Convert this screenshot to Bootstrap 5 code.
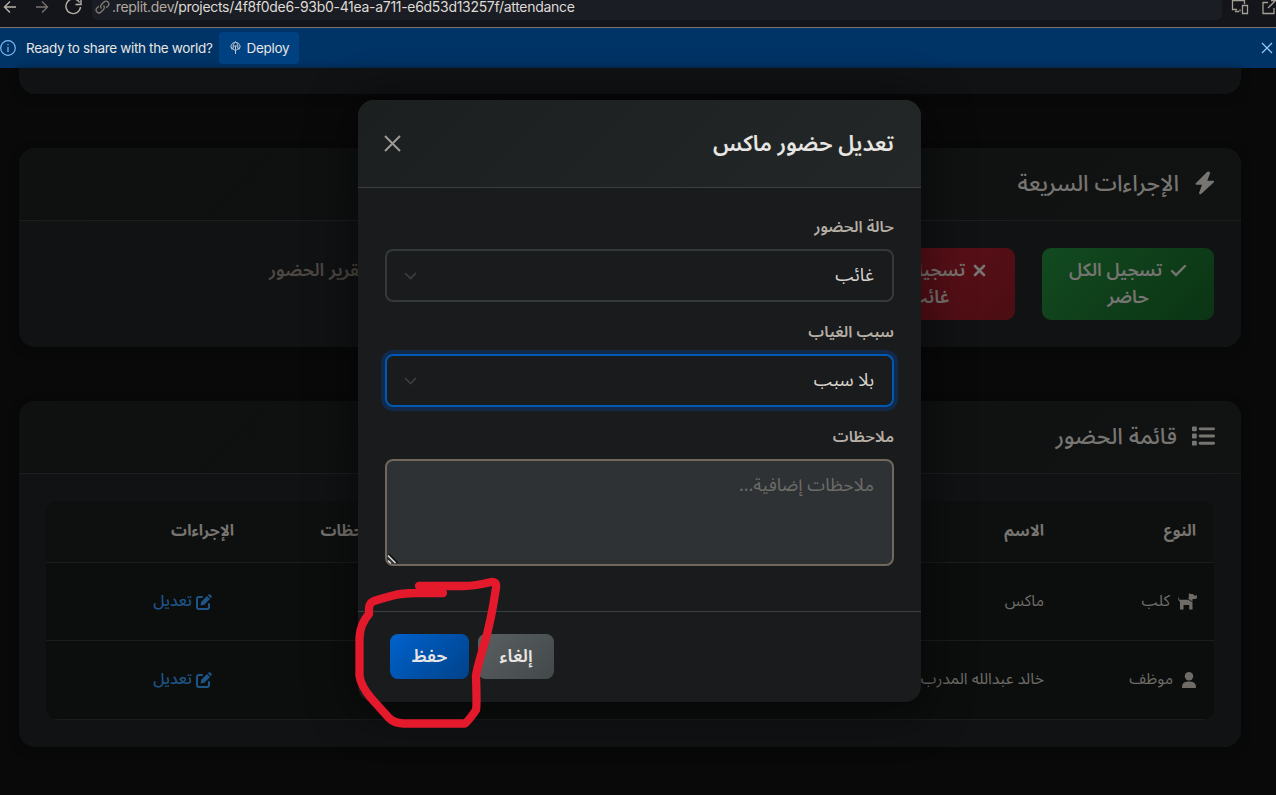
<!DOCTYPE html>
<html lang="ar">
<head>
<meta charset="utf-8">
<meta name="viewport" content="width=device-width, initial-scale=1">
<title>Attendance</title>
<link href="https://cdn.jsdelivr.net/npm/bootstrap@5.3.0/dist/css/bootstrap.min.css" rel="stylesheet">
<style>
body{background:#090909;height:795px;overflow:hidden;font-family:"Noto Sans Arabic","Noto Sans","DejaVu Sans",sans-serif;color:#777571}
svg{display:block;flex:none}
.latin{font-family:Inter,Roboto,sans-serif}
.urlbar{height:27px;background:#14141b;color:#b8b2a8}
.addr{height:20px;width:1130px;background:#1b1d24;border-radius:0 0 5px 5px;font-size:14px;line-height:13px;letter-spacing:-.3px;color:#dedad4}
.addr i{font-style:normal;color:#b0aaa1}
.notice{height:41px;border-top:1px solid #77736c;background:#003366;color:#e8e6e3;font-size:13.5px;letter-spacing:-.33px}
.deploy{height:32px;width:80px;background:#004182;border-radius:4px;font-size:13.5px;letter-spacing:-.3px;color:#e8e6e3}
.stage{padding:0 35px 0 19px}
.panel{background:#111214;border-radius:16px;overflow:hidden;box-shadow:0 3px 8px #070808}
.panel-top{height:26px;border-radius:0 0 16px 16px}
.panel-head{height:73px;background:linear-gradient(135deg,#0e1110,#0f1011 40%,#111313);border-bottom:1px solid #1d1f1f;padding:0 26px;font-size:22.5px;font-weight:500}
.panel-head span{padding-top:1px}
.act{width:172px;height:72px;flex:none;border-radius:9px;font-size:18px;font-weight:600;line-height:27px;color:#777571;padding-top:9px}
.act svg{display:inline-block;margin-left:3px}
.okb{background:linear-gradient(135deg,#124a20,#0b3414)}
.nob{background:linear-gradient(135deg,#64111b,#4b0d13)}
.report{color:#4d4843;padding-left:23px}
.grid-wrap{border-radius:12px;overflow:hidden;background:#0c0e0d}
.roster{table-layout:fixed;margin:0;font-size:15.75px;--bs-table-bg:transparent;--bs-table-color:#6f6c67;color:#6f6c67}
.roster th,.roster td{border-bottom:1px solid #1b1d1d;padding:1px 18px 0;vertical-align:middle;white-space:nowrap;background:transparent}
.roster thead th{height:61px;background:#0e100f;color:#777571;font-weight:700}
.roster td{height:78px}
.roster td:first-child{padding-right:17px}
.roster tr:last-child td{height:79px}
.roster a{color:#1d5589;font-weight:500;padding-right:22px;text-decoration:none}
.dialog-layer{position:absolute;left:358px;top:100px;width:563px;height:602px}
.dialog-layer .modal-content{height:602px;border:0;border-radius:16px;background:#1a1b1d;box-shadow:0 5px 45px 8px rgba(0,0,0,.45);color:#d8d4cf;overflow:hidden}
.dialog-layer .modal-header{height:88px;padding:0 27px 0 26px;background:linear-gradient(135deg,#1c1f1f,#242728);border-bottom:1px solid #3c3f40;border-radius:0}
.dialog-layer .modal-title{font-size:22px;font-weight:600;color:#e8e6e3;line-height:30px}
.dialog-layer .modal-body{padding:27px 27px 0}
.fl{font-size:15.75px;font-weight:600;line-height:24px;color:#b5aea5;margin:0 0 10px;display:block}
.field{height:53px;border:2px solid #343a3b;border-radius:8px;font-size:18px;padding:0 18px 0 17px;color:#d8d4cf;margin-bottom:18px}
.field.on{border-color:#0058b5;box-shadow:0 0 0 4px #12294a}
.note{height:107px;border:2px solid #71675c;border-radius:8px;background:#2e3234;font-size:18px;padding:11px 18px;color:#6d6c69;position:relative}
.note svg{position:absolute;left:0;bottom:0}
.dialog-layer .modal-footer{height:91px;border-top:1px solid #3c3f40;padding:0 27px 1px 32px;margin:0;gap:9px;justify-content:flex-start}
.mb{height:45px;border-radius:8px;font-size:18px;font-weight:600;color:#e8e6e3;border:0;padding:0;margin:0!important}
.save{width:79px;background:linear-gradient(135deg,#0062cc,#00428a)}
.cancel{width:76px;background:linear-gradient(135deg,#5a5f61,#43484a)}
.scribble{position:absolute;left:340px;top:560px}
</style>
</head>
<body>
<div class="urlbar latin d-flex align-items-start" dir="ltr">
 <svg width="92" height="20" fill="none" stroke="#b8b2a8" stroke-width="1.4"><path d="M16 7H4.500M10 1.500L4.500 7l5.500 5.500"/><path stroke="#77726c" d="M36 7h11.500M42 1.500L47.500 7 42 12.500"/><path d="M79.500 2.500A7.300 7.300 0 1 0 80.500 7M81 -1v5.500h-5.500"/></svg>
 <div class="addr d-flex"><svg width="20" height="14" viewBox="0 0 20 14" fill="none" stroke="#807b74" stroke-width="1.300"><path d="M9.500 8.500a2.800 2.800 0 0 1 0-4L12 2a2.800 2.800 0 0 1 4 4l-1.800 1.800M11.500 5.500a2.800 2.800 0 0 1 0 4L9 12a2.800 2.800 0 0 1-4-4l1.800-1.800"/></svg><span><i>.replit.dev</i>/projects/4f8f0de6-93b0-41ea-a711-e6d53d13257f/attendance</span></div>
 <svg width="54" height="20" fill="none" stroke="#a49e95" stroke-width="1.300"><path d="M15 9.500H10.500V.5h12V4M13 11.500h4M18 9.500v2M20.500 5.500h5v8h-5z"/><path d="M46 2.500h-5V13.500H52V8M46 8l8-8M49 .5h5"/></svg>
</div>
<div class="notice latin d-flex align-items-center" dir="ltr">
 <svg width="26" height="18" fill="none" stroke="#7dbcf5" stroke-width="1.200"><circle cx="8" cy="9" r="7.300"/><path d="M8 8v5M8 5v1.300"/></svg>
 <span style="width:193px" class="text-nowrap">Ready to share with the world?</span>
 <button class="btn deploy p-0 d-flex align-items-center justify-content-center gap-1"><svg width="14" height="14" viewBox="0 0 14 14" fill="none" stroke="#b7c3cf" stroke-width="1"><path d="M3 8.500a4.500 4.500 0 1 1 7 0M4 5h5M6.500 13V5M4.500 7.500C3 3 6.500 1 6.500 1s3.500 2 2 6.500M4.500 8l2 2 2-2M2 5.500l2.500 3.500M11 5.500L8.500 9"/></svg><span>Deploy</span></button>
 <svg class="ms-auto" width="15" height="12" fill="none" stroke="#8ec7fa" stroke-width="1.300"><path d="M1 1l10 10M11 1L1 11"/></svg>
</div>
<main class="stage" dir="rtl">
 <div class="panel panel-top"></div>
 <section class="panel" style="margin-top:54px;height:199px">
  <div class="panel-head d-flex align-items-center"><svg width="20" height="24" viewBox="0 0 20 24" fill="#777571" style="margin-bottom:2px"><path d="M12 1L.8 12.200c-.6.700-.2 1.600.7 1.600H7L4.200 21.500c-.5 1.500 1.200 2.300 2.200 1.300L18.600 11.500c.8-.8.300-1.800-.7-1.800h-5.600L15 2.600c.7-1.600-1.500-3-3-1.600z"/></svg><span class="me-3">الإجراءات السريعة</span></div>
  <div class="d-flex" style="padding:27px;gap:27px">
   <div class="act okb text-center"><svg width="17" height="14" viewBox="0 0 17 14" fill="none" stroke="#777571" stroke-width="2.400" stroke-linecap="round"><path d="M2 7l4 4L15 2"/></svg> تسجيل الكل<br>حاضر</div>
   <div class="act nob text-center"><svg width="13" height="14" viewBox="0 0 13 14" fill="none" stroke="#777571" stroke-width="2.600" stroke-linecap="round"><path d="M2 2l9 9M11 2l-9 9"/></svg> تسجيل الكل<br>غائب</div>
   <div class="act"></div><div class="act"></div>
   <div class="act report" dir="ltr"><div class="text-start text-nowrap">تقرير الحضور</div></div>
  </div>
 </section>
 <section class="panel" style="margin-top:54px;height:346px">
  <div class="panel-head d-flex align-items-center"><svg width="23" height="20" viewBox="0 0 24 20" fill="#777571" style="margin-bottom:2px"><rect x="0" y="0" width="5" height="5" rx="1"/><rect x="0" y="7.500" width="5" height="5" rx="1"/><rect x="0" y="15" width="5" height="5" rx="1"/><rect x="7" y="1" width="17" height="3" rx="1.500"/><rect x="7" y="8.500" width="17" height="3" rx="1.500"/><rect x="7" y="16" width="17" height="3" rx="1.500"/></svg><span style="margin-right:15px">قائمة الحضور</span></div>
  <div style="padding:27px">
   <div class="grid-wrap">
    <table class="table roster">
     <colgroup><col style="width:152px"><col style="width:300px"><col style="width:351px"><col style="width:159px"><col></colgroup>
     <thead><tr><th>النوع</th><th>الاسم</th><th></th><th>الملاحظات</th><th>الإجراءات</th></tr></thead>
     <tbody>
      <tr><td><div class="d-flex align-items-center"><svg width="19" height="17" viewBox="0 0 19 17" fill="#6f6c67"><path d="M.8 4.200c-.3 1.800.6 2.600 2 2.600h7.400l4.300 2.400V16.500h-3.300V12H5.500v4.500H2V9Q0 8 0 4.500zM11 0l1.500 1H15l1 1.500h3V4c0 1.500-1 2-2.500 2H14.500v2.500L10.500 6z"/></svg><span class="me-2">كلب</span></div></td><td>ماكس</td><td></td><td></td><td><a href="#" class="d-flex align-items-center"><svg width="16" height="16" viewBox="0 0 16 16" fill="none" stroke="#1d5589"><path stroke-width="2" stroke-linecap="round" d="M6 3H3Q1 3 1 5v8q0 2 2 2h8q2 0 2-2v-3"/><path fill="#1d5589" stroke="none" d="M4.500 11.500l.8-3.800L11 2l3 3-5.700 5.700zM11.800 1.300Q13.300-.5 15 1q1.500 1.600-.2 3.200z"/></svg><span class="me-1">تعديل</span></a></td></tr>
      <tr><td><div class="d-flex align-items-center"><svg width="16" height="17" viewBox="0 0 16 17" fill="#6f6c67"><circle cx="8" cy="4.200" r="4.200"/><path d="M1 16q-.5-6.500 6-6.500h2q6.500 0 6 6.500z"/></svg><span class="me-2">موظف</span></div></td><td>خالد عبدالله المدرب</td><td></td><td></td><td><a href="#" class="d-flex align-items-center"><svg width="16" height="16" viewBox="0 0 16 16" fill="none" stroke="#1d5589"><path stroke-width="2" stroke-linecap="round" d="M6 3H3Q1 3 1 5v8q0 2 2 2h8q2 0 2-2v-3"/><path fill="#1d5589" stroke="none" d="M4.500 11.500l.8-3.800L11 2l3 3-5.700 5.700zM11.800 1.300Q13.300-.5 15 1q1.500 1.600-.2 3.200z"/></svg><span class="me-1">تعديل</span></a></td></tr>
     </tbody>
    </table>
   </div>
  </div>
 </section>
</main>
<div class="dialog-layer" dir="rtl">
 <div class="modal-content">
  <div class="modal-header d-flex justify-content-between align-items-center"><h5 class="modal-title">تعديل حضور ماكس</h5><svg width="18" height="17" fill="none" stroke="#9b9a97" stroke-width="2"><path d="M1 1l15 15M16 1L1 16"/></svg></div>
  <div class="modal-body">
   <label class="fl">حالة الحضور</label>
   <div class="field d-flex align-items-center justify-content-between"><span>غائب</span><svg width="13" height="8" fill="none" stroke="#3c4042" stroke-width="1.600"><path d="M1 1l5.500 5.500L12 1"/></svg></div>
   <label class="fl">سبب الغياب</label>
   <div class="field on d-flex align-items-center justify-content-between"><span>بلا سبب</span><svg width="13" height="8" fill="none" stroke="#3c4042" stroke-width="1.600"><path d="M1 1l5.500 5.500L12 1"/></svg></div>
   <label class="fl">ملاحظات</label>
   <div class="note">ملاحظات إضافية...<svg width="11" height="11" fill="none" stroke-width="1.500"><path stroke="#111" d="M2 1l9 9M1 7l3 4"/><path stroke="#ddd" d="M1 2.500l7.500 7.500M1 7.500l3 3"/></svg></div>
  </div>
  <div class="modal-footer d-flex align-items-center" dir="ltr"><button class="btn mb save">حفظ</button><button class="btn mb cancel">إلغاء</button></div>
 </div>
</div>
<svg class="scribble" width="170" height="180" viewBox="340 560 170 180" fill="none" stroke="#e4192c" stroke-width="8.300" stroke-linecap="round" stroke-linejoin="round"><path d="M443 593H416Q402 593 391 596T374 601Q369 603 369 608L369 614Q360 624 359.500 638V676Q361 686 371 698L389 718Q394 723 403 723.500H465Q467 723 476 710Q477 706 476 676Q477 668 484 645T496 588Q497 581 491 582Q475 586 464 586H419"/></svg>
<script src="https://cdn.jsdelivr.net/npm/bootstrap@5.3.0/dist/js/bootstrap.bundle.min.js"></script>
</body>
</html>
